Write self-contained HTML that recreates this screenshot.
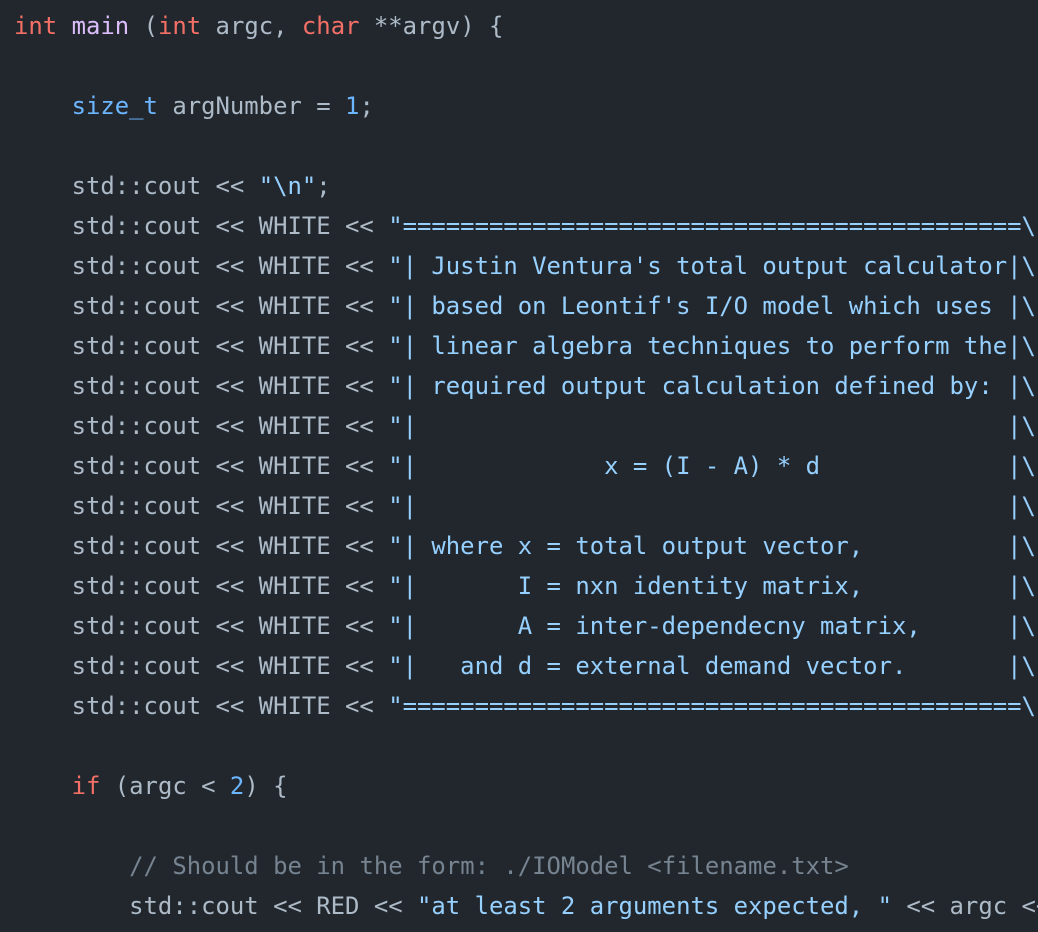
<!DOCTYPE html>
<html><head><meta charset="utf-8"><style>
html,body{margin:0;padding:0;background:#22272e;}
body{width:1038px;height:932px;overflow:hidden;}
pre{margin:0;padding:6px 0 0 14px;font-family:"DejaVu Sans Mono","Liberation Mono",monospace;font-size:23.92px;line-height:40px;color:#adbac7;white-space:pre;overflow:hidden;width:1024px;}
.k{color:#f47067}.f{color:#dcbdfb}.t{color:#6cb6ff}.s{color:#96d0ff}.c{color:#768390}
</style></head><body><pre><span class="k">int</span> <span class="f">main</span> (<span class="k">int</span> argc, <span class="k">char</span> **argv) {

    <span class="t">size_t</span> argNumber = <span class="t">1</span>;

    std::cout &lt;&lt; <span class="s">"\n"</span>;
    std::cout &lt;&lt; WHITE &lt;&lt; <span class="s">"===========================================\n"</span>
    std::cout &lt;&lt; WHITE &lt;&lt; <span class="s">"| Justin Ventura's total output calculator|\n"</span>
    std::cout &lt;&lt; WHITE &lt;&lt; <span class="s">"| based on Leontif's I/O model which uses |\n"</span>
    std::cout &lt;&lt; WHITE &lt;&lt; <span class="s">"| linear algebra techniques to perform the|\n"</span>
    std::cout &lt;&lt; WHITE &lt;&lt; <span class="s">"| required output calculation defined by: |\n"</span>
    std::cout &lt;&lt; WHITE &lt;&lt; <span class="s">"|                                         |\n"</span>
    std::cout &lt;&lt; WHITE &lt;&lt; <span class="s">"|             x = (I - A) * d             |\n"</span>
    std::cout &lt;&lt; WHITE &lt;&lt; <span class="s">"|                                         |\n"</span>
    std::cout &lt;&lt; WHITE &lt;&lt; <span class="s">"| where x = total output vector,          |\n"</span>
    std::cout &lt;&lt; WHITE &lt;&lt; <span class="s">"|       I = nxn identity matrix,          |\n"</span>
    std::cout &lt;&lt; WHITE &lt;&lt; <span class="s">"|       A = inter-dependecny matrix,      |\n"</span>
    std::cout &lt;&lt; WHITE &lt;&lt; <span class="s">"|   and d = external demand vector.       |\n"</span>
    std::cout &lt;&lt; WHITE &lt;&lt; <span class="s">"===========================================\n"</span>

    <span class="k">if</span> (argc &lt; <span class="t">2</span>) {

        <span class="c">// Should be in the form: ./IOModel &lt;filename.txt&gt;</span>
        std::cout &lt;&lt; RED &lt;&lt; <span class="s">"at least 2 arguments expected, "</span> &lt;&lt; argc &lt;&lt; <span class="s">" given"</span>
</pre></body></html>
